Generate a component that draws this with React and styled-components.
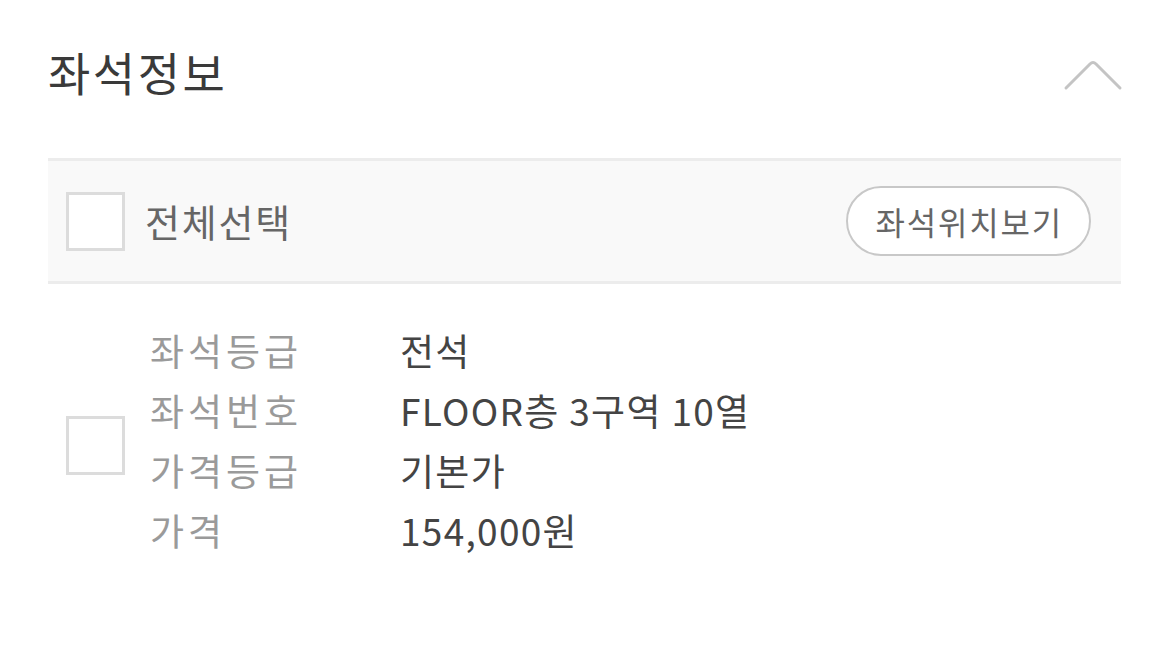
import React from "react";
import styled, { createGlobalStyle } from "styled-components";

const GlobalStyle = createGlobalStyle`
  html, body {
    margin: 0;
    padding: 0;
    background: #fff;
  }
  body {
    font-family: "Noto Sans CJK KR", "Noto Sans", sans-serif;
  }
`;

const Page = styled.div`
  padding: 0 48px;
`;

const TitleRow = styled.div`
  height: 158px;
  padding-bottom: 16px;
  box-sizing: border-box;
  display: flex;
  align-items: center;
  justify-content: space-between;
`;

const Title = styled.h2`
  margin: 0;
  font-size: 46px;
  line-height: 1;
  font-weight: 400;
  color: #3a3a3a;
  letter-spacing: 2.5px;
`;

const Toggle = styled.button`
  border: 0;
  background: none;
  padding: 0;
  margin: 6px -3px 0 0;
  display: flex;
  cursor: pointer;
`;

const SelectBar = styled.div`
  height: 120px;
  display: flex;
  align-items: center;
  justify-content: space-between;
  padding: 0 30px 0 18px;
  background: #f9f9f9;
  border-top: 3px solid #ececec;
  border-bottom: 3px solid #ececec;
`;

const CheckLabel = styled.label`
  display: flex;
  align-items: center;
  gap: 20px;
  font-size: 38px;
  line-height: 1;
  color: #666;
  letter-spacing: 1.8px;
`;

const Box = styled.span`
  width: 59px;
  height: 59px;
  box-sizing: border-box;
  border: 3px solid #dcdcdc;
  background: #fff;
  flex-shrink: 0;
  margin-top: ${(p) => p.$shift || 0}px;
`;

const PillButton = styled.button`
  height: 70px;
  padding: 0 26px 0 28px;
  border: 2.5px solid #c8c8c8;
  border-radius: 35px;
  background: #fff;
  font-family: inherit;
  font-size: 32px;
  line-height: 1;
  color: #666;
  letter-spacing: 1.8px;
  cursor: pointer;
`;

const SeatItem = styled.div`
  display: flex;
  align-items: center;
  gap: 25px;
  padding: 36px 0 0 18px;
`;

const InfoList = styled.dl`
  margin: 0;
  display: grid;
  grid-template-columns: 250px auto;
`;

const Term = styled.dt`
  margin: 0;
  font-size: 37px;
  line-height: 60px;
  color: #9a9a9a;
  letter-spacing: 4px;
`;

const Value = styled.dd`
  margin: 0;
  font-size: 37px;
  line-height: 60px;
  color: #444;
  letter-spacing: 1.3px;
`;

const ChevronUp = () => (
  <svg width="62" height="36" viewBox="0 0 62 36" fill="none">
    <path
      d="M4 32 L28 8 Q31 5 34 8 L58 32"
      stroke="#c4c4c4"
      strokeWidth="3"
      strokeLinecap="round"
      strokeLinejoin="round"
    />
  </svg>
);

const seat = [
  ["좌석등급", "전석"],
  ["좌석번호", "FLOOR층 3구역 10열"],
  ["가격등급", "기본가"],
  ["가격", "154,000원"],
];

export default function App() {
  return (
    <Page>
      <GlobalStyle />
      <TitleRow>
        <Title>좌석정보</Title>
        <Toggle aria-label="접기">
          <ChevronUp />
        </Toggle>
      </TitleRow>
      <SelectBar>
        <CheckLabel>
          <Box />
          전체선택
        </CheckLabel>
        <PillButton>좌석위치보기</PillButton>
      </SelectBar>
      <SeatItem>
        <Box $shift={11} />
        <InfoList>
          {seat.map(([k, v]) => (
            <React.Fragment key={k}>
              <Term>{k}</Term>
              <Value>{v}</Value>
            </React.Fragment>
          ))}
        </InfoList>
      </SeatItem>
    </Page>
  );
}
